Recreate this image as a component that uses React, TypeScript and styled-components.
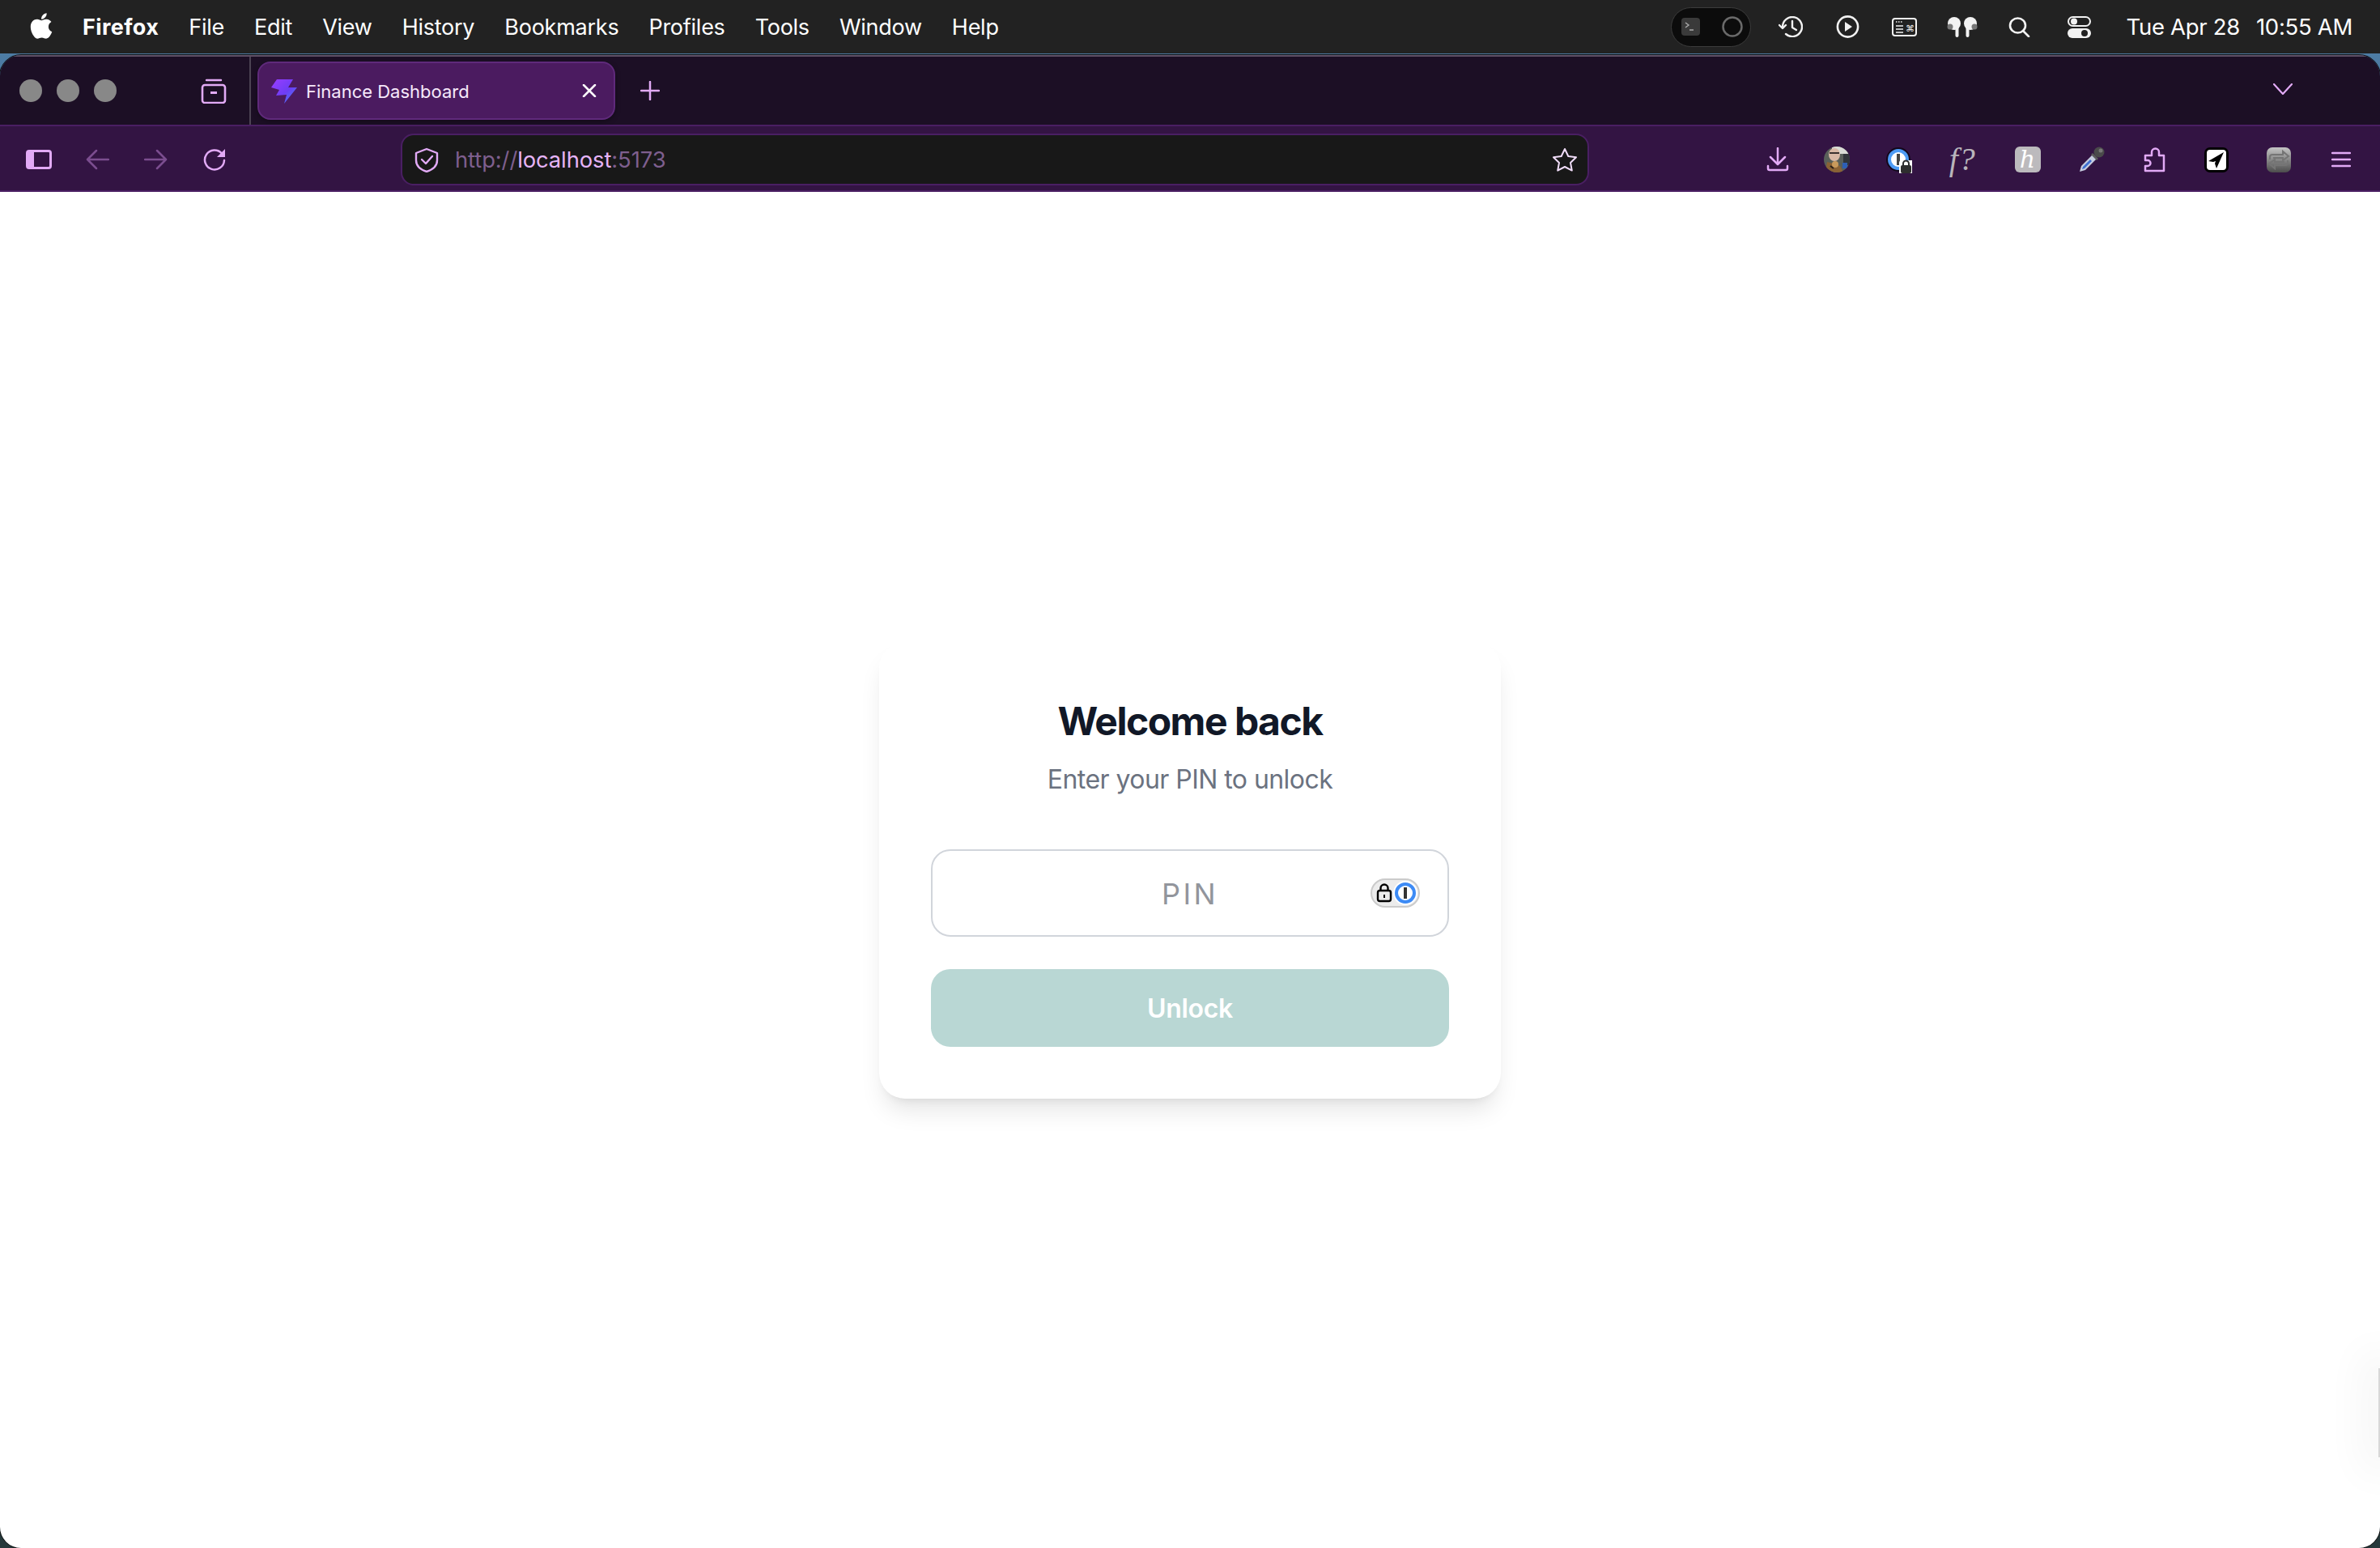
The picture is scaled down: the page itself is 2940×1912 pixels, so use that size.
import React from "react";
import styled, { createGlobalStyle } from "styled-components";
import { FaApple } from "react-icons/fa";

const LILAC = "#e2aaf6";
const LILAC_DIM = "#7b4d8f";

const GlobalStyle = createGlobalStyle`
  html, body { margin: 0; padding: 0; }
  body { font-family: Inter, "Liberation Sans", sans-serif; }
  * { box-sizing: border-box; }
`;

const Screen = styled.div`
  height: 100vh;
  display: flex;
  flex-direction: column;
  overflow: hidden;
  background: linear-gradient(180deg, #4f80ab 0%, #3c5c6c 30%, #25383a 100%);
`;

const MenuBar = styled.header`
  height: 66px;
  flex: none;
  display: flex;
  align-items: center;
  padding: 0 34px 0 37px;
  background: #222222;
  color: #ffffff;
  font-family: Inter, "Liberation Sans", sans-serif;
  font-size: 27px;
`;

const AppleMark = styled(FaApple)`
  width: 32px;
  height: 36px;
  margin: -2px 35px 0 -2px;
  color: #fff;
`;

const MenuItems = styled.nav`
  display: flex;
  gap: 37px;
`;

const MenuItem = styled.span<{ $strong?: boolean }>`
  font-weight: ${({ $strong }) => ($strong ? 700 : 400)};
  letter-spacing: ${({ $strong }) => ($strong ? "0.4px" : "-0.25px")};
`;

const StatusArea = styled.div`
  margin-left: auto;
  display: flex;
  align-items: center;
`;

const RecorderPill = styled.div`
  width: 99px;
  height: 49px;
  margin-right: 14px;
  padding: 0 9px 0 12px;
  display: flex;
  align-items: center;
  justify-content: space-between;
  border-radius: 25px;
  background: #0c0c0c;
  border: 1px solid #3c3c3c;
`;

const StatusSlot = styled.div<{ $w: number }>`
  width: ${({ $w }) => $w}px;
  display: flex;
  justify-content: center;
  align-items: center;
  color: #f2f2f2;
`;

const Clock = styled.div`
  margin-left: 18px;
  display: flex;
  gap: 20px;
  font-size: 27.5px;
  letter-spacing: -0.3px;
`;

const Window = styled.main`
  position: relative;
  flex: 1;
  margin-top: 2px;
  display: flex;
  flex-direction: column;
  overflow: hidden;
  border-radius: 26px;
  box-shadow: 0 0 0 1px #111;
`;

const TabStrip = styled.div`
  height: 88px;
  flex: none;
  display: flex;
  align-items: stretch;
  background: #1c0f25;
  border-top: 2px solid #5f5166;
  border-bottom: 2px solid #4a1f63;
  padding-right: 108px;
`;

const WindowControls = styled.div`
  width: 310px;
  flex: none;
  display: flex;
  align-items: center;
  gap: 18px;
  padding-left: 24px;
  border-right: 2px solid #4c4353;
`;

const TrafficLight = styled.span`
  width: 28px;
  height: 28px;
  border-radius: 50%;
  background: #888888;
`;

const TabsButton = styled.span`
  display: flex;
  margin-left: 86px;
`;

const Tab = styled.div`
  width: 442px;
  height: 72px;
  margin: 6px 0 0 8px;
  padding: 0 21px 0 14px;
  display: flex;
  align-items: center;
  border-radius: 16px;
  background: #4b1b60;
  border: 2px solid #5f2a7b;
  box-shadow: 0 2px 6px rgba(0, 0, 0, 0.35);
  color: #f6e9fb;
  font-size: 22px;
`;

const TabTitle = styled.span`
  flex: 1;
  margin-left: 11px;
  padding-top: 1px;
`;

const NewTab = styled.span`
  display: flex;
  align-items: center;
  margin-left: 31px;
`;

const TabListButton = styled.span`
  margin-left: auto;
  display: flex;
  align-items: center;
  padding-bottom: 4px;
`;

const Toolbar = styled.div`
  height: 81px;
  flex: none;
  display: flex;
  align-items: center;
  padding: 3px 10px 0 12px;
  background: #331443;
  border-bottom: 2px solid #4a1f63;
`;

const ToolSlot = styled.span<{ $w?: number }>`
  width: ${({ $w }) => $w ?? 72}px;
  flex: none;
  display: flex;
  align-items: center;
  justify-content: center;
`;

const UrlBar = styled.div`
  width: 1468px;
  height: 64px;
  margin-left: 195px;
  padding: 0 12px 0 15px;
  display: flex;
  align-items: center;
  border-radius: 16px;
  background: #181818;
  border: 2px solid #4a1f63;
  font-size: 27.4px;
  color: #7e5f8e;
`;

const UrlText = styled.span`
  flex: 1;
  margin-left: 20px;
  letter-spacing: -0.1px;
`;

const UrlHost = styled.span`
  color: #e6b4f7;
`;

const ToolEnd = styled.div`
  margin-left: auto;
  display: flex;
  align-items: center;
`;

const FormulaBadge = styled.span`
  font-family: "Liberation Serif", serif;
  font-style: italic;
  font-size: 40px;
  line-height: 1;
  color: #b9b5bb;
  letter-spacing: 1px;
`;

const HandBadge = styled.span`
  width: 32px;
  height: 32px;
  display: flex;
  align-items: center;
  justify-content: center;
  border-radius: 6px;
  background: #bcbabd;
  color: #fff;
  font-family: "DejaVu Serif", "Liberation Serif", serif;
  font-style: italic;
  font-size: 30px;
  line-height: 1;
`;

const Page = styled.section`
  flex: 1;
  display: flex;
  align-items: center;
  justify-content: center;
  background: #ffffff;
`;

const Card = styled.form`
  width: 768px;
  padding: 64px;
  border-radius: 32px;
  background: #fff;
  box-shadow: 0 20px 30px -6px rgba(0, 0, 0, 0.1), 0 8px 12px -8px rgba(0, 0, 0, 0.1);
`;

const Heading = styled.h1`
  margin: 0 0 14px;
  padding-top: 2px;
  text-align: center;
  font-size: 48px;
  line-height: 64px;
  font-weight: 700;
  letter-spacing: -1.5px;
  color: #111827;
`;

const Subheading = styled.p`
  margin: 0 0 62px;
  padding-top: 2px;
  text-align: center;
  font-size: 32px;
  line-height: 48px;
  letter-spacing: -0.55px;
  color: #6b7280;
`;

const PinField = styled.div`
  position: relative;
  margin-bottom: 40px;
`;

const PinInput = styled.input`
  display: block;
  width: 100%;
  height: 108px;
  padding: 2px 0 0;
  border: 2px solid #d1d5db;
  border-radius: 24px;
  background: #fff;
  text-align: center;
  font-family: inherit;
  font-size: 36px;
  letter-spacing: 3.4px;
  &::placeholder {
    color: #92959c;
    opacity: 1;
  }
`;

const PasswordBadge = styled.span`
  position: absolute;
  top: 36px;
  right: 36px;
  display: flex;
`;

const UnlockButton = styled.button`
  display: block;
  width: 100%;
  height: 96px;
  padding: 1px 0 0;
  border: 0;
  border-radius: 24px;
  background: #b9d7d4;
  color: #fff;
  font-family: inherit;
  font-size: 32px;
  font-weight: 600;
  letter-spacing: -0.3px;
`;

const EdgeGlow = styled.span`
  position: absolute;
  right: 0;
  bottom: 112px;
  width: 2px;
  height: 110px;
  background: #d8d8d8;
  box-shadow: 0 0 50px 20px rgba(0, 0, 0, 0.045);
`;

const Stroke = styled.svg<{ $color?: string; $sw?: number }>`
  display: block;
  fill: none;
  stroke: ${({ $color }) => $color ?? LILAC};
  stroke-width: ${({ $sw }) => $sw ?? 2.5};
  stroke-linecap: round;
  stroke-linejoin: round;
`;

const TerminalIcon = () => (
  <svg width="23" height="22" viewBox="0 0 23 22">
    <rect width="23" height="22" rx="4" fill="#3a3a3a" />
    <path d="M5 6l4 3-4 3M10 15h5" stroke="#aaa" strokeWidth="1.4" fill="none" />
  </svg>
);

const HistoryIcon = () => (
  <Stroke $color="#f2f2f2" $sw={2.4} width="30" height="26" viewBox="0 0 30 26">
    <path d="M5 13a12 12 0 1 1 4 9" />
    <path d="M1 11l4 4 4-4" />
    <path d="M17 6v8l5 3" />
  </Stroke>
);

const PlayIcon = () => (
  <svg width="29" height="28" viewBox="0 0 29 28">
    <circle cx="14.5" cy="14" r="12.6" fill="none" stroke="#f2f2f2" strokeWidth="2.6" />
    <path d="M11 8l9 6-9 6z" fill="#f2f2f2" />
  </svg>
);

const KeyboardIcon = () => (
  <svg width="31" height="23" viewBox="0 0 31 23">
    <rect x="1" y="1" width="29" height="21" rx="3" fill="none" stroke="#f2f2f2" strokeWidth="2" />
    <path d="M5 5h1.5M8 5h1.5M11 5h1.5M5 10h9M5 14h9M5 18h9" stroke="#f2f2f2" strokeWidth="1.6" />
    <text x="17" y="17" fontSize="11" fill="#f2f2f2" fontFamily="DejaVu Sans">⌘</text>
  </svg>
);

const AirPodsIcon = () => (
  <svg width="42" height="25" viewBox="0 0 42 25">
    <ellipse cx="11" cy="8" rx="8" ry="8" fill="#f2f2f2" />
    <ellipse cx="31" cy="8" rx="8" ry="8" fill="#f2f2f2" />
    <circle cx="6" cy="12" r="3.5" fill="#777" />
    <circle cx="36" cy="12" r="3.5" fill="#777" />
    <rect x="12.5" y="10" width="4" height="15" rx="2" fill="#f2f2f2" />
    <rect x="25.5" y="10" width="4" height="15" rx="2" fill="#f2f2f2" />
  </svg>
);

const SearchIcon = () => (
  <Stroke $color="#f2f2f2" $sw={2.6} width="27" height="25" viewBox="0 0 27 25">
    <ellipse cx="11.5" cy="10.5" rx="9.5" ry="9" />
    <path d="M18 17l7 7" />
  </Stroke>
);

const ControlIcon = () => (
  <svg width="29" height="27" viewBox="0 0 29 27">
    <rect x="1" y="1" width="27" height="11" rx="5.5" fill="none" stroke="#f2f2f2" strokeWidth="2" />
    <circle cx="8" cy="6.5" r="4" fill="#f2f2f2" />
    <rect y="15" width="29" height="12" rx="6" fill="#f2f2f2" />
    <circle cx="21" cy="21" r="4" fill="#222" />
  </svg>
);

const TabsIcon = () => (
  <svg width="32" height="31" viewBox="0 0 32 31" fill="none">
    <path d="M7 2h18" stroke={LILAC} strokeWidth="2.4" strokeLinecap="round" />
    <rect x="2" y="8" width="28" height="22" rx="3" stroke={LILAC} strokeWidth="2.6" />
    <rect x="12" y="16" width="8" height="3" fill={LILAC} />
  </svg>
);

const BoltIcon = () => (
  <svg width="33" height="31" viewBox="0 0 33 31">
    <defs>
      <linearGradient id="bolt" x1="0" y1="0" x2="1" y2="1">
        <stop offset="0" stopColor="#9a3dff" />
        <stop offset="0.55" stopColor="#6d3df5" />
        <stop offset="1" stopColor="#3f8bf5" />
      </linearGradient>
    </defs>
    <path d="M8 1h20l-6 10h11L17 31l3-11-13 1 4-7-10-3z" fill="url(#bolt)" />
  </svg>
);

const CloseIcon = () => (
  <Stroke $color="#fff" width="18" height="16" viewBox="0 0 18 16">
    <path d="M2 1l14 14M16 1L2 15" />
  </Stroke>
);

const PlusIcon = () => (
  <Stroke width="24" height="24" viewBox="0 0 24 24">
    <path d="M12 1v22M1 12h22" />
  </Stroke>
);

const ChevronIcon = () => (
  <Stroke $sw={2.2} width="24" height="14" viewBox="0 0 24 14">
    <path d="M1 1l11 12L23 1" />
  </Stroke>
);

const SidebarIcon = () => (
  <svg width="32" height="24" viewBox="0 0 32 24">
    <rect x="1.5" y="1.5" width="29" height="21" rx="2.5" fill="none" stroke={LILAC} strokeWidth="3" />
    <rect x="1" y="1" width="9" height="22" rx="2" fill={LILAC} />
  </svg>
);

const ArrowIcon = ({ back, color }: { back?: boolean; color: string }) => (
  <Stroke $color={color} width="29" height="26" viewBox="0 0 29 26">
    <path d={back ? "M28 13H2M13 2L2 13l11 11" : "M1 13h26M16 2l11 11-11 11"} />
  </Stroke>
);

const ReloadIcon = () => (
  <svg width="29" height="28" viewBox="0 0 29 28" fill="none">
    <path d="M24 6.5A12 12 0 1 0 27 15" stroke={LILAC} strokeWidth="2.5" strokeLinecap="round" />
    <path d="M28 1v10H18z" fill={LILAC} />
  </svg>
);

const ShieldIcon = () => (
  <Stroke $sw={2.4} width="30" height="31" viewBox="0 0 30 31">
    <path d="M15 2l13 5v9c0 8-7 12-13 14C9 28 2 24 2 16V7z" />
    <path d="M9 15l5 5 8-9" />
  </Stroke>
);

const StarIcon = () => (
  <Stroke $color="#f0dcf8" $sw={2} width="32" height="30" viewBox="0 0 32 30">
    <path d="M16 2l4.3 9 9.7 1.3-7 6.7 1.8 9.6L16 24l-8.8 4.6L9 19l-7-6.7L11.7 11z" />
  </Stroke>
);

const DownloadIcon = () => (
  <Stroke width="28" height="30" viewBox="0 0 28 30">
    <path d="M14 1v19M5 12l9 9 9-9M2 23v3a2 2 0 0 0 2 2h20a2 2 0 0 0 2-2v-3" />
  </Stroke>
);

const AvatarIcon = () => (
  <svg width="32" height="32" viewBox="0 0 32 32">
    <clipPath id="avatar-clip"><circle cx="16" cy="16" r="16" /></clipPath>
    <g clipPath="url(#avatar-clip)">
      <rect width="32" height="32" fill="#59605a" />
      <rect x="10" width="22" height="9" fill="#d9dcd6" />
      <rect x="24" y="9" width="8" height="14" fill="#30353a" />
      <ellipse cx="13" cy="10" rx="7" ry="8" fill="#d8b8a6" />
      <path d="M7 8h12" stroke="#3a3130" strokeWidth="2" />
      <path d="M2 32l2-13 8 2 8 3 4 8z" fill="#8a6235" />
      <circle cx="14" cy="22" r="4" fill="#c89a5c" />
      <path d="M8 24l4 3" stroke="#2a2019" strokeWidth="2" />
      <rect x="23" y="20" width="6" height="7" fill="#2d5fb5" />
    </g>
  </svg>
);

const PasswordToolbarIcon = () => (
  <svg width="32" height="33" viewBox="0 0 32 33">
    <circle cx="15" cy="16" r="15" fill="#14081b" />
    <circle cx="15" cy="16" r="11" fill="#fff" stroke="#4d9bf5" strokeWidth="4" />
    <rect x="13" y="9" width="4" height="14" fill="#444" />
    <path d="M16 33V20a3 3 0 0 1 3-3h13v16z" fill="#fff" />
    <rect x="18" y="23" width="13" height="10" rx="2" fill="#2e2e2e" />
    <path d="M21 23v-2a3.5 3.5 0 0 1 7 0v2" fill="none" stroke="#2e2e2e" strokeWidth="2" />
  </svg>
);

const DropperIcon = () => (
  <svg width="32" height="32" viewBox="0 0 32 32">
    <path d="M1 31l2-7L17 10l5 5L8 29z" fill="#c7cde0" />
    <path d="M4 28l1-3 9-9 2 2-9 9z" fill="#3f6fd1" />
    <path d="M17 8l7 7-2 2-7-7z" fill="#5c5c5c" />
    <circle cx="25" cy="7" r="6.5" fill="#4a4a4a" />
    <circle cx="27" cy="5" r="2.5" fill="#777" />
  </svg>
);

const PuzzleIcon = () => (
  <Stroke width="27" height="31" viewBox="0 0 27 31">
    <path d="M2 10h8V6a4.5 4.5 0 0 1 9 0v4h6v19H2v-6h3a3.5 3.5 0 0 0 0-7H2z" />
  </Stroke>
);

const PlaneIcon = () => (
  <svg width="30" height="31" viewBox="0 0 30 31">
    <rect width="30" height="31" rx="7" fill="#000" />
    <rect x="3" y="3" width="24" height="25" rx="4" fill="#fff" />
    <path d="M24 6L5 17l6 1 3-1-1 3 2 6z" fill="#000" />
  </svg>
);

const SwapIcon = () => (
  <svg width="30" height="31" viewBox="0 0 30 31">
    <defs>
      <linearGradient id="swap" x1="0" y1="0" x2="0" y2="1">
        <stop offset="0" stopColor="#c4c4c4" />
        <stop offset="1" stopColor="#4c4c4c" />
      </linearGradient>
    </defs>
    <rect width="30" height="31" rx="7" fill="url(#swap)" />
    <path d="M4 15v-3a3 3 0 0 1 3-3h13V5l7 6-7 5v-3H8M26 16v3a3 3 0 0 1-3 3H10v4l-7-6 7-5v3h12" fill="none" stroke="#757575" strokeWidth="2" />
  </svg>
);

const MenuIcon = () => (
  <Stroke width="24" height="20" viewBox="0 0 24 20">
    <path d="M1 2h22M1 10h22M1 18h22" />
  </Stroke>
);

const PasswordBadgeIcon = () => (
  <svg width="61" height="36" viewBox="0 0 61 36">
    <rect x="1" y="1" width="59" height="34" rx="17" fill="#ececec" stroke="#cbcbcb" strokeWidth="2" />
    <rect x="9" y="15" width="16" height="13" rx="2.5" fill="none" stroke="#000" strokeWidth="2.4" />
    <path d="M12.5 15v-3a4.5 4.5 0 0 1 9 0v3" fill="none" stroke="#000" strokeWidth="2.4" />
    <rect x="16" y="20" width="2" height="4" fill="#000" />
    <circle cx="43" cy="18" r="15" fill="#fff" />
    <circle cx="43" cy="18" r="11" fill="#fff" stroke="#3d8bf5" strokeWidth="4" />
    <rect x="41" y="11" width="4" height="14" fill="#333" />
  </svg>
);

const MENU = ["File", "Edit", "View", "History", "Bookmarks", "Profiles", "Tools", "Window", "Help"];

export default function App() {
  return (
    <Screen>
      <GlobalStyle />
      <MenuBar>
        <AppleMark />
        <MenuItems>
          <MenuItem $strong>Firefox</MenuItem>
          {MENU.map(item => (
            <MenuItem key={item}>{item}</MenuItem>
          ))}
        </MenuItems>
        <StatusArea>
          <RecorderPill>
            <TerminalIcon />
            <svg width="26" height="26" viewBox="0 0 26 26">
              <circle cx="13" cy="13" r="11.5" fill="none" stroke="#6a6a6a" strokeWidth="2.5" />
            </svg>
          </RecorderPill>
          <StatusSlot $w={71}><HistoryIcon /></StatusSlot>
          <StatusSlot $w={70}><PlayIcon /></StatusSlot>
          <StatusSlot $w={70}><KeyboardIcon /></StatusSlot>
          <StatusSlot $w={73}><AirPodsIcon /></StatusSlot>
          <StatusSlot $w={67}><SearchIcon /></StatusSlot>
          <StatusSlot $w={81}><ControlIcon /></StatusSlot>
          <Clock>
            <span>Tue Apr 28</span>
            <span>10:55 AM</span>
          </Clock>
        </StatusArea>
      </MenuBar>

      <Window>
        <TabStrip>
          <WindowControls>
            <TrafficLight />
            <TrafficLight />
            <TrafficLight />
            <TabsButton><TabsIcon /></TabsButton>
          </WindowControls>
          <Tab>
            <BoltIcon />
            <TabTitle>Finance Dashboard</TabTitle>
            <CloseIcon />
          </Tab>
          <NewTab><PlusIcon /></NewTab>
          <TabListButton><ChevronIcon /></TabListButton>
        </TabStrip>

        <Toolbar>
          <ToolSlot><SidebarIcon /></ToolSlot>
          <ToolSlot><ArrowIcon back color={LILAC_DIM} /></ToolSlot>
          <ToolSlot><ArrowIcon color={LILAC_DIM} /></ToolSlot>
          <ToolSlot><ReloadIcon /></ToolSlot>
          <UrlBar>
            <ShieldIcon />
            <UrlText>
              http://<UrlHost>localhost</UrlHost>:5173
            </UrlText>
            <StarIcon />
          </UrlBar>
          <ToolEnd>
            <ToolSlot $w={73}><DownloadIcon /></ToolSlot>
            <ToolSlot $w={74.5}><AvatarIcon /></ToolSlot>
            <ToolSlot $w={78}><PasswordToolbarIcon /></ToolSlot>
            <ToolSlot $w={79.5}><FormulaBadge>f?</FormulaBadge></ToolSlot>
            <ToolSlot $w={81}><HandBadge>h</HandBadge></ToolSlot>
            <ToolSlot $w={78.5}><DropperIcon /></ToolSlot>
            <ToolSlot $w={75.5}><PuzzleIcon /></ToolSlot>
            <ToolSlot $w={77}><PlaneIcon /></ToolSlot>
            <ToolSlot $w={78}><SwapIcon /></ToolSlot>
            <ToolSlot $w={76}><MenuIcon /></ToolSlot>
          </ToolEnd>
        </Toolbar>

        <Page>
          <Card onSubmit={e => e.preventDefault()}>
            <Heading>Welcome back</Heading>
            <Subheading>Enter your PIN to unlock</Subheading>
            <PinField>
              <PinInput type="password" placeholder="PIN" />
              <PasswordBadge><PasswordBadgeIcon /></PasswordBadge>
            </PinField>
            <UnlockButton type="submit" disabled>Unlock</UnlockButton>
          </Card>
        </Page>
        <EdgeGlow />
      </Window>
    </Screen>
  );
}
